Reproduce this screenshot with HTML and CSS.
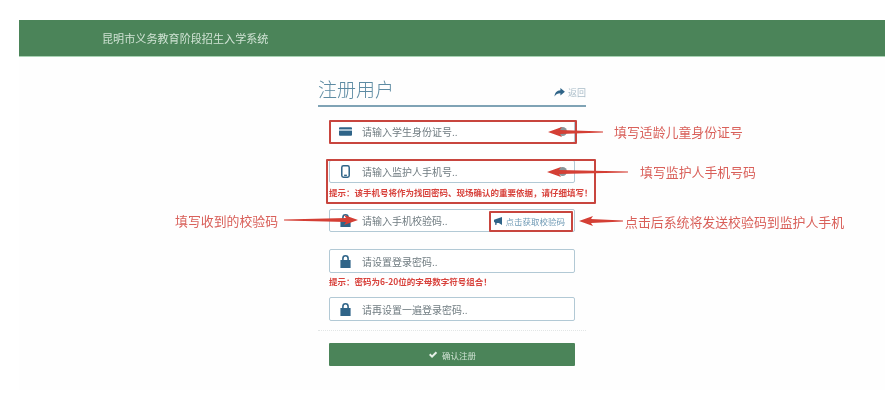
FILE: index.html
```html
<!DOCTYPE html>
<html lang="zh">
<head>
<meta charset="utf-8">
<title>注册用户</title>
<link rel="stylesheet" href="styles.css">
</head>
<body>
<div class="page">
  <header class="topbar"><span class="brand">昆明市义务教育阶段招生入学系统</span></header>
  <main class="panel">
    <div class="title-row">
      <h1>注册用户</h1>
      <a class="back"><svg class="back-icon" viewBox="0 0 12 10"><path d="M7 0l5 4.2L7 8.4V5.8C4 5.8 2 6.6.5 9.5.7 5.5 3 2.9 7 2.6z"/></svg>返回</a>
    </div>
    <form class="form">
      <div class="field f1">
        <svg class="icon" viewBox="0 0 14 12"><rect y="1.5" width="14" height="9" rx="1"/><rect y="3.6" width="14" height="1.6" fill="#cfe0ea"/></svg>
        <span class="ph">请输入学生身份证号..</span>
        <i class="dot"></i>
      </div>
      <div class="field f2">
        <svg class="icon" viewBox="0 0 14 14"><rect x="3" y=".8" width="8" height="12.4" rx="1.8" fill="none" stroke="#2f6488" stroke-width="1.6"/><rect x="5.5" y="10.4" width="3" height="1.4"/></svg>
        <span class="ph">请输入监护人手机号..</span>
        <i class="dot"></i>
      </div>
      <p class="hint h1">提示：该手机号将作为找回密码、现场确认的重要依据，请仔细填写！</p>
      <div class="field f3">
        <svg class="icon" viewBox="2.5 1.5 9 11.5"><path d="M4 6V4.5a3 3 0 0 1 6 0V6h1.5v7h-9V6zM5.4 6h3.2V4.5a1.6 1.6 0 0 0-3.2 0z"/></svg>
        <span class="ph">请输入手机校验码..</span>
        <a class="send"><svg class="send-icon" viewBox="0 0 10 10"><path d="M10 0v10L6 7.6H3.4L3 10H1.6L1.4 7.2 0 6V3.5z"/></svg>点击获取校验码</a>
      </div>
      <div class="field f4">
        <svg class="icon" viewBox="2.5 1.5 9 11.5"><path d="M4 6V4.5a3 3 0 0 1 6 0V6h1.5v7h-9V6zM5.4 6h3.2V4.5a1.6 1.6 0 0 0-3.2 0z"/></svg>
        <span class="ph">请设置登录密码..</span>
      </div>
      <p class="hint h2">提示：密码为6-20位的字母数字符号组合！</p>
      <div class="field f5">
        <svg class="icon" viewBox="2.5 1.5 9 11.5"><path d="M4 6V4.5a3 3 0 0 1 6 0V6h1.5v7h-9V6zM5.4 6h3.2V4.5a1.6 1.6 0 0 0-3.2 0z"/></svg>
        <span class="ph">请再设置一遍登录密码..</span>
      </div>
      <div class="divider"></div>
      <button class="submit" type="button"><svg class="check" viewBox="0 0 12 10"><path d="M1 5l1.8-1.8L4.8 5.2 9.4.6 11.2 2.4 4.8 8.8z"/></svg>确认注册</button>
    </form>
  </main>

  <div class="overlay">
    <i class="box b1"></i>
    <i class="box b2"></i>
    <i class="box b3"></i>
    <i class="arrow left a1"></i>
    <i class="arrow left a2"></i>
    <i class="arrow right a3"></i>
    <i class="arrow left a4"></i>
    <span class="note n1">填写适龄儿童身份证号</span>
    <span class="note n2">填写监护人手机号码</span>
    <span class="note n3">填写收到的校验码</span>
    <span class="note n4">点击后系统将发送校验码到监护人手机</span>
  </div>
</div>
</body>
</html>
```
FILE: styles.css
```css
* { box-sizing: border-box; }
html, body { margin: 0; background: #fff; }
.page {
  position: relative;
  width: 894px;
  height: 403px;
  overflow: hidden;
  padding-top: 20px;
  font-family: "Noto Sans CJK SC", "Liberation Sans", sans-serif;
  filter: blur(0.55px);
}
.topbar {
  margin: 0 9px 0 19px;
  height: 37px;
  background: #4b8459;
  border-bottom: 1px solid #a9d3b4;
  display: flex;
  align-items: center;
  padding-left: 83px;
}
.brand { color: #cfe2d3; font-size: 11.1px; }
.panel {
  margin: 0 9px 0 19px;
  height: 333px;
  background: #fefefe;
  padding: 19px 299px 0 299px;
}
.title-row {
  display: flex;
  justify-content: space-between;
  align-items: center;
  height: 31px;
  border-bottom: 2px solid #7fa3b5;
}
h1 { margin: 0 0 4px; font-size: 19px; font-weight: 300; color: #5d8ba3; line-height: 26px; }
.back { display: flex; align-items: center; gap: 3px; margin-top: 3px; font-size: 9px; color: #a9bcc8; }
.back-icon { width: 11px; height: 9px; fill: #2f6488; }
.form { padding: 13px 11px 0; }
.field {
  position: relative;
  height: 24px;
  border: 1.5px solid #b2c9d5;
  border-radius: 2px;
  background: #fff;
  display: flex;
  align-items: center;
  padding-left: 9px;
}
.f1 { margin-top: 0; height: 23px; }
.f2 { margin-top: 17px; height: 23px; }
.f3 { margin-top: 9px; height: 23px; }
.f4 { margin-top: 17px; }
.f5 { margin-top: 8px; }
.icon { width: 13px; height: 13px; fill: #2f6488; flex: none; }
.ph { margin-left: 10px; font-size: 10px; color: #6f7b80; }
.dot { position: absolute; right: 7px; top: 6px; width: 9px; height: 9px; border-radius: 50%; background: #8a9498; }
.send { margin-left: auto; margin-right: 9px; display: flex; align-items: center; gap: 3px; font-size: 8.5px; color: #6f9ab5; }
.send-icon { width: 8px; height: 8px; fill: #2f6488; }
.hint { margin: 2px 0 0; height: 15px; line-height: 15px; font-size: 8.5px; font-weight: 700; color: #d8433d; white-space: nowrap; }
.h2 { margin-top: 1px; }
.divider { margin: 9px -11px 0; border-top: 1px dotted #e2e6e6; }
.submit {
  margin-top: 12px;
  display: flex;
  align-items: center;
  justify-content: center;
  gap: 4px;
  width: 100%;
  height: 23px;
  border: 0;
  border-radius: 1px;
  background: #4b8459;
  color: #cfe2d3;
  font: 8.5px "Noto Sans CJK SC", sans-serif;
}
.check { width: 10px; height: 8px; fill: #e6f0e8; }
.overlay { position: absolute; inset: 0; pointer-events: none; }
.box { position: absolute; border: 2px solid #c8453e; border-radius: 1px; }
.b1 { left: 329px; top: 120px; width: 248px; height: 24px; }
.b2 { left: 326px; top: 159px; width: 270px; height: 45px; }
.b3 { left: 489px; top: 211px; width: 84px; height: 21px; }
.arrow { position: absolute; height: 10px; background: #d43f35; }
.left { clip-path: polygon(0 50%, 14px 0, 12px 30%, 100% 45%, 100% 55%, 12px 70%, 14px 100%); }
.right { clip-path: polygon(100% 50%, calc(100% - 14px) 0, calc(100% - 12px) 30%, 0 45%, 0 55%, calc(100% - 12px) 70%, calc(100% - 14px) 100%); }
.a1 { left: 548px; top: 127px; width: 55px; }
.a2 { left: 547px; top: 167px; width: 81px; }
.a3 { left: 284px; top: 215px; width: 74px; }
.a4 { left: 579px; top: 216px; width: 44px; }
.note { position: absolute; font-size: 12.9px; line-height: 16px; color: #d9605a; white-space: nowrap; }
.n1 { left: 614px; top: 124px; }
.n2 { left: 640px; top: 164px; }
.n3 { left: 175px; top: 213px; }
.n4 { left: 625px; top: 214px; }
```
